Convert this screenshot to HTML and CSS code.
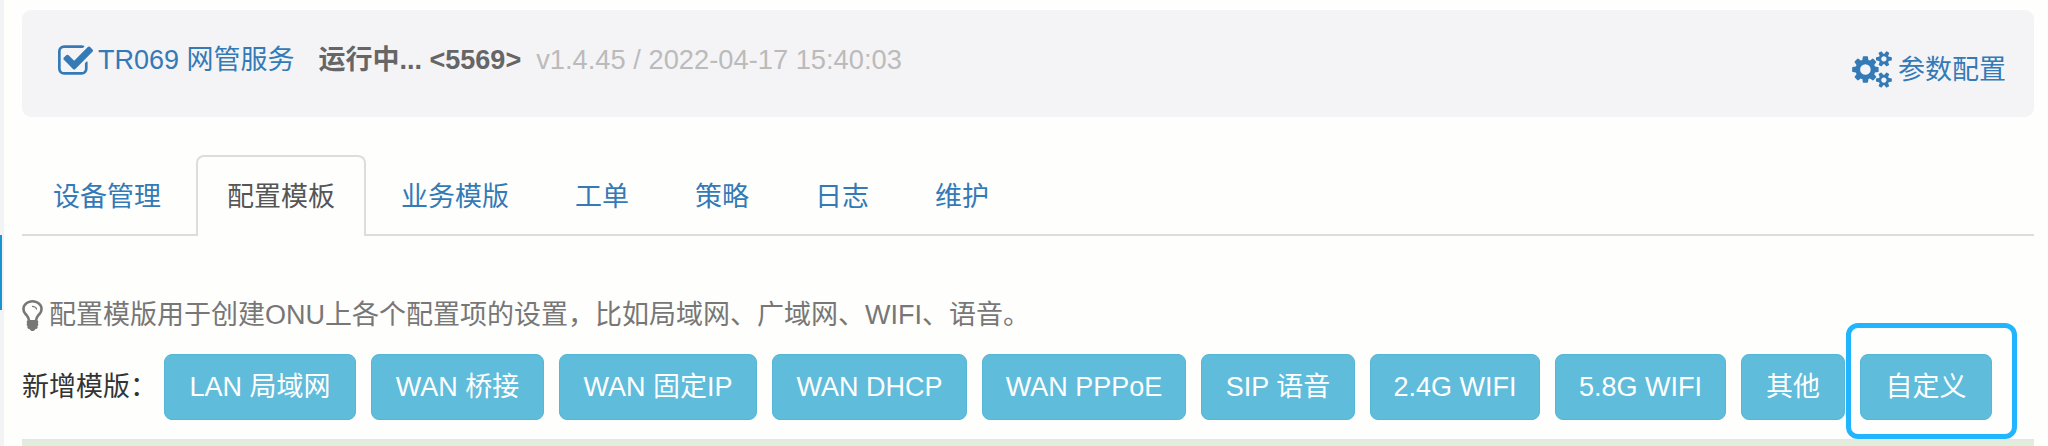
FILE: index.html
```html
<!DOCTYPE html>
<html lang="en">
<head>
    <meta charset="UTF-8">
    <meta name="viewport" content="width=device-width, initial-scale=1.0">
    <title>TR069 网管服务</title>
    <link rel="stylesheet" href="styles.css">
</head>
<body>

    <div class="sidebar-edge"></div>

    <div class="container">

        <!-- Service status -->
        <div class="panel">
            <div class="status">
                <a class="service" href="#">
                    <svg class="icon" viewBox="64 128 1664 1408"><path d="M1472 930v318q0 119-84.5 203.5t-203.5 84.5h-832q-119 0-203.5-84.5t-84.5-203.5v-832q0-119 84.5-203.5t203.5-84.5h832q63 0 117 25 15 7 18 23 3 17-9 29l-49 49q-10 10-23 10-3 0-9-2-23-6-45-6h-832q-66 0-113 47t-47 113v832q0 66 47 113t113 47h832q66 0 113-47t47-113v-254q0-13 9-22l64-64q10-10 23-10 6 0 12 3 20 8 20 29zm231-489l-814 814q-24 24-57 24t-57-24l-430-430q-24-24-24-57t24-57l110-110q24-24 57-24t57 24l263 263 647-647q24-24 57-24t57 24l110 110q24 24 24 57t-24 57z"/></svg>
                    TR069 网管服务
                </a>
                <span class="running">运行中... &lt;5569&gt;</span>
                <span class="version">v1.4.45 / 2022-04-17 15:40:03</span>
            </div>
            <a class="settings" href="#">
                <svg class="icon-gears" viewBox="0 0 1920 1792"><path d="M896 896q0-106-75-181t-181-75-181 75-75 181 75 181 181 75 181-75 75-181zm768 512q0-52-38-90t-90-38-90 38-38 90q0 53 37.5 90.5t90.5 37.5 90.5-37.5 37.5-90.5zm0-1024q0-52-38-90t-90-38-90 38-38 90q0 53 37.5 90.5t90.5 37.5 90.5-37.5 37.5-90.5zm-384 421v185q0 10-7 19.5t-16 10.5l-155 24q-11 35-32 76 34 48 90 115 7 11 7 20 0 12-7 19-23 30-82.5 89.5t-78.5 59.5q-11 0-21-7l-115-90q-37 19-77 31-11 108-23 155-7 24-30 24h-186q-11 0-20-7.5t-10-17.5l-23-153q-34-10-75-31l-118 89q-7 7-20 7-11 0-21-8-144-133-144-160 0-9 7-19 10-14 41-53t47-61q-23-44-35-82l-152-24q-10-1-17-9.5t-7-19.5v-185q0-10 7-19.5t16-10.5l155-24q11-35 32-76-34-48-90-115-7-11-7-20 0-12 7-20 22-30 82-89t79-59q11 0 21 7l115 90q34-18 77-32 11-108 23-154 7-24 30-24h186q11 0 20 7.5t10 17.5l23 153q34 10 75 31l118-89q8-7 20-7 11 0 21 8 144 133 144 160 0 8-7 19-12 16-42 54t-45 60q23 48 34 82l152 23q10 2 17 10.5t7 19.5zm640 533v140q0 16-149 31-12 27-30 52 51 113 51 138 0 4-4 7-122 71-124 71-8 0-46-47t-52-68q-20 2-30 2t-30-2q-14 21-52 68t-46 47q-2 0-124-71-4-3-4-7 0-25 51-138-18-25-30-52-149-15-149-31v-140q0-16 149-31 13-29 30-52-51-113-51-138 0-4 4-7 4-2 35-20t59-34 30-16q8 0 46 46.5t52 67.5q20-2 30-2t30 2q51-71 92-112l6-2q4 0 124 70 4 3 4 7 0 25-51 138 17 23 30 52 149 15 149 31zm0-1024v140q0 16-149 31-12 27-30 52 51 113 51 138 0 4-4 7-122 71-124 71-8 0-46-47t-52-68q-20 2-30 2t-30-2q-14 21-52 68t-46 47q-2 0-124-71-4-3-4-7 0-25 51-138-18-25-30-52-149-15-149-31v-140q0-16 149-31 13-29 30-52-51-113-51-138 0-4 4-7 4-2 35-20t59-34 30-16q8 0 46 46.5t52 67.5q20-2 30-2t30 2q51-71 92-112l6-2q4 0 124 70 4 3 4 7 0 25-51 138 17 23 30 52 149 15 149 31z"/></svg>
                参数配置
            </a>
        </div>

        <!-- Tabs -->
        <ul class="tabs">
            <li><a href="#">设备管理</a></li>
            <li class="active"><a href="#">配置模板</a></li>
            <li><a href="#">业务模版</a></li>
            <li><a href="#">工单</a></li>
            <li><a href="#">策略</a></li>
            <li><a href="#">日志</a></li>
            <li><a href="#">维护</a></li>
        </ul>

        <p class="hint">
            <svg class="icon-bulb" viewBox="384 128 1024 1536"><path d="M1120 576q0 13-9.5 22.5t-22.5 9.5-22.5-9.5-9.5-22.5q0-46-54-71t-106-25q-13 0-22.5-9.5t-9.5-22.5 9.5-22.5 22.5-9.5q50 0 99.5 16t87 54 37.5 90zm160 0q0-72-34.5-134t-90-101.5-123-62-136.5-22.5-136.5 22.5-123 62-90 101.5-34.5 134q0 101 68 180 10 11 30.5 33t30.5 33q128 153 141 298h228q13-145 141-298 10-11 30.5-33t30.5-33q68-79 68-180zm128 0q0 155-103 268-45 49-74.5 87t-59.5 95.5-34 107.5q47 28 47 82 0 37-25 64 25 27 25 64 0 52-45 81 13 23 13 47 0 46-31.5 71t-77.5 25q-20 44-60 70t-87 26-87-26-60-70q-46 0-77.5-25t-31.5-71q0-24 13-47-45-29-45-81 0-37 25-64-25-27-25-64 0-54 47-82-4-50-34-107.5t-59.5-95.5-74.5-87q-103-113-103-268 0-99 44.5-184.5t117-142 164-89 186.5-32.5 186.5 32.5 164 89 117 142 44.5 184.5z"/></svg>
            配置模版用于创建ONU上各个配置项的设置，比如局域网、广域网、WIFI、语音。
        </p>

        <div class="add-row">
            <span class="add-label">新增模版：</span>
            <div class="btn-group">
                <button class="btn">LAN 局域网</button>
                <button class="btn">WAN 桥接</button>
                <button class="btn">WAN 固定IP</button>
                <button class="btn">WAN DHCP</button>
                <button class="btn">WAN PPPoE</button>
                <button class="btn">SIP 语音</button>
                <button class="btn">2.4G WIFI</button>
                <button class="btn">5.8G WIFI</button>
                <button class="btn">其他</button>
                <button class="btn btn-custom">自定义</button>
            </div>
        </div>

        <div class="alert-strip"></div>
    </div>

</body>
</html>
```

FILE: styles.css
```css
html, body {
    height: 100%;
}
body {
    margin: 0;
    background: #fefefc;
    font-family: "Liberation Sans", "Noto Sans CJK SC", sans-serif;
    font-size: 27px;
    overflow: hidden;
}
a {
    color: #337ab7;
    text-decoration: none;
}
.sidebar-edge {
    position: fixed;
    top: 0;
    left: 0;
    width: 4px;
    height: 100%;
    background: #f1f3f5;
}
.sidebar-edge::after {
    content: "";
    position: absolute;
    top: 235px;
    left: 0;
    width: 2px;
    height: 75px;
    background: #1a94d0;
}
.container {
    margin: 0 14px 0 22px;
    padding-top: 10px;
}

/* status panel */
.panel {
    height: 107px;
    box-sizing: border-box;
    padding: 32px 28px 0 36px;
    background: #f4f4f6;
    border-radius: 9px;
    display: flex;
    justify-content: space-between;
    align-items: flex-start;
}
.status {
    display: flex;
    align-items: center;
    line-height: 36px;
}
.service {
    display: flex;
    align-items: center;
    gap: 5px;
}
.icon {
    width: 35px;
    height: 30px;
    fill: #337ab7;
}
.running {
    margin-left: 24px;
    color: #666;
    font-weight: bold;
}
.version {
    margin-left: 15px;
    color: #bbb;
    font-size: 27.3px;
}
.settings {
    display: flex;
    align-items: center;
    gap: 6px;
    margin-top: 9px;
    line-height: 36px;
}
.icon-gears {
    width: 40px;
    height: 37px;
    fill: #337ab7;
}

/* tabs */
.tabs {
    list-style: none;
    margin: 38px 0 0;
    padding: 0;
    height: 81px;
    box-sizing: border-box;
    display: flex;
    gap: 4px;
    border-bottom: 2px solid #ddd;
}
.tabs li a {
    display: block;
    height: 81px;
    box-sizing: border-box;
    padding: 21px 29px 0;
    line-height: 38px;
    border: 2px solid transparent;
    border-bottom: 0;
    border-radius: 8px 8px 0 0;
    white-space: nowrap;
}
.tabs li.active a {
    color: #555;
    background: #fefefc;
    border-color: #ddd;
}

/* hint and buttons */
.hint {
    margin: 61px 0 0;
    height: 36px;
    line-height: 36px;
    color: #777;
    display: flex;
    align-items: center;
    gap: 6px;
    white-space: nowrap;
}
.icon-bulb {
    width: 21px;
    height: 31px;
    fill: #777;
}
.add-row {
    display: flex;
    align-items: center;
    margin-top: 21px;
    height: 66px;
}
.add-label {
    width: 142px;
    color: #333;
    line-height: 36px;
    white-space: nowrap;
}
.btn-group {
    display: grid;
    grid-template-columns: 192px 173px 198px 195px 204px 154px 170px 171px 104px 132px;
    gap: 15px;
}
.btn {
    height: 66px;
    padding: 0;
    background: #5fbcdb;
    border: 1px solid #55b6d6;
    border-radius: 8px;
    color: #fff;
    font: inherit;
    line-height: 36px;
    white-space: nowrap;
}
.btn-custom {
    position: relative;
}
.btn-custom::after {
    content: "";
    position: absolute;
    top: -32px;
    left: -15px;
    right: -26px;
    bottom: -20px;
    border: 5px solid #22b5ff;
    border-radius: 12px;
}
.alert-strip {
    margin-top: 19px;
    height: 7px;
    box-sizing: border-box;
    background: #dff0d8;
    border-top: 2px solid #e6e6e6;
}
```
